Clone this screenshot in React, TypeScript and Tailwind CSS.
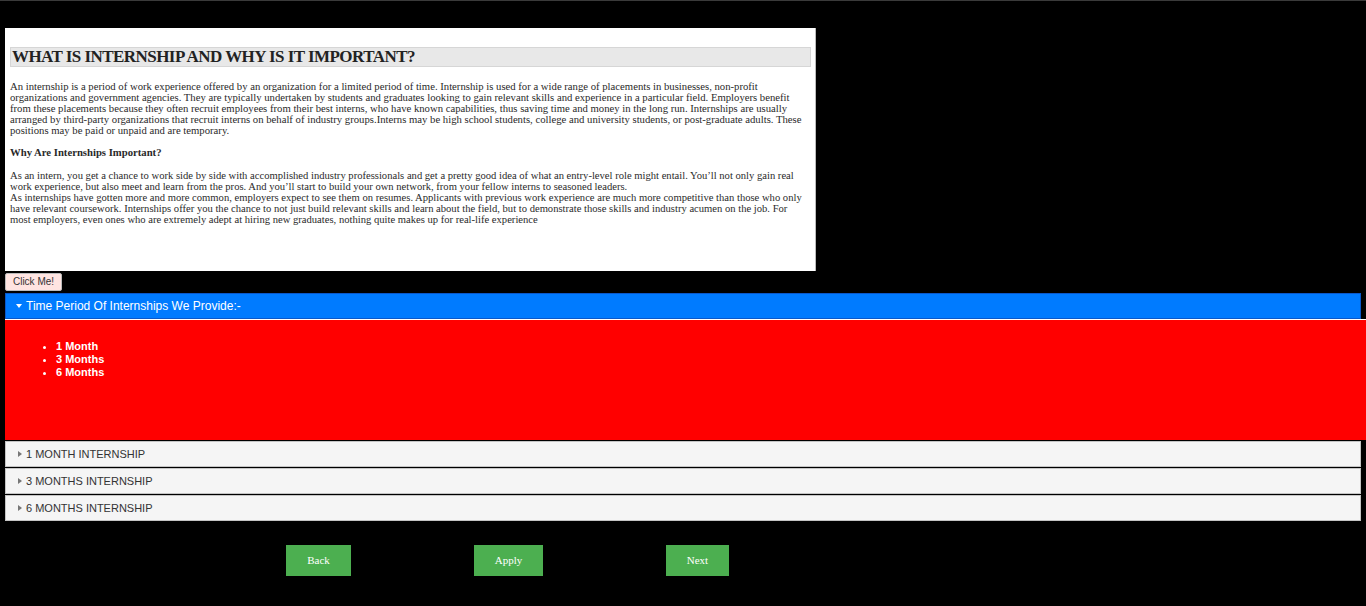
import { useState } from "react"

const serif = { fontFamily: '"Liberation Serif", "Times New Roman", serif' }

function Caret({ open }: { open: boolean }) {
  return open ? (
    <span className="inline-block w-0 h-0 border-l-[3px] border-r-[3px] border-t-[4px] border-l-transparent border-r-transparent border-t-white mr-[4px] mb-[1px]" />
  ) : (
    <span className="inline-block w-0 h-0 border-t-[3px] border-b-[3px] border-l-[4px] border-t-transparent border-b-transparent border-l-[#777] mr-[4px] mb-[1px]" />
  )
}

function App() {
  const [open, setOpen] = useState(true)
  const rows = ["1 MONTH INTERNSHIP", "3 MONTHS INTERNSHIP", "6 MONTHS INTERNSHIP"]

  return (
    <div className="min-h-[606px] bg-black border-t border-[#3a3a3a] pt-[27px]" style={{ fontFamily: '"Liberation Sans", Arial, sans-serif' }}>
      <div className="ml-[5px] w-[811px] h-[243px] bg-white border-r border-[#bbb] pl-[5px] pr-[4px] pt-[19px] text-[#2a2a2a]" style={serif}>
        <h2 className="bg-[#e8e8e8] border border-[#d6d6d6] text-[17px] tracking-[-0.55px] leading-[18px] font-bold text-[#222] px-[1px]">
          WHAT IS INTERNSHIP AND WHY IS IT IMPORTANT?
        </h2>
        <p className="text-[10.7px] leading-[11px] mt-[14px] pr-[6px]">
          An internship is a period of work experience offered by an organization for a limited period of time. Internship is used for a wide range of placements in businesses, non-profit organizations and government agencies. They are typically undertaken by students and graduates looking to gain relevant skills and experience in a particular field. Employers benefit from these placements because they often recruit employees from their best interns, who have known capabilities, thus saving time and money in the long run. Internships are usually arranged by third-party organizations that recruit interns on behalf of industry groups.Interns may be high school students, college and university students, or post-graduate adults. These positions may be paid or unpaid and are temporary.
        </p>
        <p className="text-[10.7px] leading-[11px] font-bold mt-[11px]">Why Are Internships Important?</p>
        <p className="text-[10.6px] leading-[11px] mt-[12px] pr-[5px]">
          As an intern, you get a chance to work side by side with accomplished industry professionals and get a pretty good idea of what an entry-level role might entail. You’ll not only gain real work experience, but also meet and learn from the pros. And you’ll start to build your own network, from your fellow interns to seasoned leaders.
          <br />
          As internships have gotten more and more common, employers expect to see them on resumes. Applicants with previous work experience are much more competitive than those who only have relevant coursework. Internships offer you the chance to not just build relevant skills and learn about the field, but to demonstrate those skills and industry acumen on the job. For most employers, even ones who are extremely adept at hiring new graduates, nothing quite makes up for real-life experience
        </p>
      </div>

      <button className="block ml-[5px] mt-[2px] h-[18px] w-[57px] bg-[#ffe4e1] border border-[#bbb] text-[10px] leading-[16px] text-[#333] rounded-[2px]">
        Click Me!
      </button>

      <div className="ml-[5px] mt-[2px]">
        <div
          className="w-[1356px] h-[26px] bg-[#007bff] border border-[#0a58ca] text-white text-[12px] flex items-center pl-[10px] cursor-pointer"
          onClick={() => setOpen(!open)}
        >
          <Caret open={open} />
          Time Period Of Internships We Provide:-
        </div>
        {open && (
          <div className="h-[121px] bg-[#ff0000] border-t border-white pt-[20px]">
            <ul className="list-disc pl-[51px] text-white text-[11px] leading-[13px] font-bold">
              <li>1 Month</li>
              <li>3 Months</li>
              <li>6 Months</li>
            </ul>
          </div>
        )}
        <div className="flex flex-col gap-[1px] mt-[1px]">
          {rows.map((r) => (
            <div key={r} className="w-[1356px] h-[26px] bg-[#f5f5f5] border border-[#c4c4c4] text-[11px] text-[#333] flex items-center pl-[12px]">
              <Caret open={false} />
              {r}
            </div>
          ))}
        </div>
      </div>

      <div className="flex mt-[24px] text-white text-[11px]" style={serif}>
        <button className="ml-[286px] w-[65px] h-[31px] bg-[#4caf50]">Back</button>
        <button className="ml-[123px] w-[69px] h-[31px] bg-[#4caf50]">Apply</button>
        <button className="ml-[123px] w-[63px] h-[31px] bg-[#4caf50]">Next</button>
      </div>
    </div>
  )
}

export default App
